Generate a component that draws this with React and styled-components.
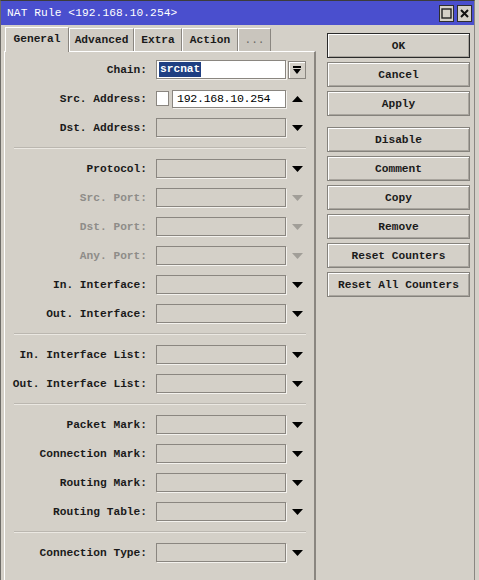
import React from "react";
import styled, { createGlobalStyle } from "styled-components";

const GlobalStyle = createGlobalStyle`
  html, body {
    margin: 0;
    padding: 0;
    height: 580px;
    overflow: hidden;
    background: #d4d0c8;
  }
`;

const FONT = `"Liberation Mono", "DejaVu Sans Mono", monospace`;

const Window = styled.div`
  width: 475px;
  height: 580px;
  box-sizing: border-box;
  background: #d4d0c8;
  border-left: 1px solid #6e6c68;
  border-right: 1px solid #8a8782;
  border-top: 1px solid #3c3c3c;
  font-family: ${FONT};
  font-size: 11.2px;
  color: #000;
  overflow: hidden;
`;

const TitleBar = styled.div`
  height: 24px;
  background: #4a4fce;
  display: flex;
  align-items: center;
  justify-content: space-between;
  padding: 0 2px 0 6px;
  color: #fff;
`;

const TitleText = styled.span`
  letter-spacing: 0.1px;
`;

const TitleButtons = styled.div`
  display: flex;
  gap: 3px;
`;

const TitleButton = styled.div`
  width: 15px;
  height: 17px;
  box-sizing: border-box;
  background: #d4d0c8;
  border: 1px solid #2e2e2e;
  display: flex;
  align-items: center;
  justify-content: center;
`;

const Body = styled.div`
  display: flex;
  align-items: flex-start;
  padding: 2px 0 0 3px;
`;

const LeftSide = styled.div`
  display: flex;
  flex-direction: column;
`;

const TabStrip = styled.div`
  display: flex;
  align-items: flex-end;
  height: 24px;
  padding-left: 1px;
  position: relative;
  z-index: 1;
`;

const Tab = styled.div`
  width: ${(p) => p.$w}px;
  height: ${(p) => (p.$active ? 25 : 23)}px;
  box-sizing: border-box;
  display: flex;
  align-items: center;
  justify-content: center;
  background: ${(p) => (p.$active ? "#d4d0c8" : p.$dim ? "#c9c5bd" : "#d0ccc4")};
  border-top: 1px solid #fff;
  border-left: 1px solid #fff;
  border-right: 1px solid #8a8680;
  padding-bottom: ${(p) => (p.$active ? 2 : 0)}px;
  margin-bottom: ${(p) => (p.$active ? -1 : 0)}px;
  font-weight: ${(p) => (p.$dim ? "normal" : "bold")};
  color: ${(p) => (p.$dim ? "#6d6b66" : "#1a1a1a")};
`;

const Panel = styled.div`
  width: 312px;
  height: 560px;
  box-sizing: border-box;
  border-top: 1px solid #fff;
  border-left: 1px solid #fff;
  border-right: 2px solid #8a8680;
  padding-top: 8px;
  display: flex;
  flex-direction: column;
  gap: 10px;
`;

const Row = styled.div`
  display: grid;
  grid-template-columns: 144px 130px 20px;
  column-gap: 7px;
  align-items: center;
  height: 19px;
`;

const Label = styled.div`
  text-align: right;
  padding-right: 2px;
  white-space: pre;
  font-weight: bold;
  color: ${(p) => (p.$disabled ? "#8e8c88" : "#1a1a1a")};
`;

const Field = styled.div`
  height: 19px;
  box-sizing: border-box;
  background: ${(p) => (p.$white ? "#fff" : "#d4d0c8")};
  border: 1px solid #8a8680;
  box-shadow: 1px 1px 0 #f4f2ee;
  display: flex;
  align-items: center;
  padding-left: 2px;
`;

const Selected = styled.span`
  background: #1f3f82;
  color: #fff;
  font-weight: bold;
  padding: 0 1px;
  line-height: 15px;
`;

const SplitField = styled.div`
  display: flex;
  gap: 3px;
  align-items: center;
`;

const Check = styled.div`
  width: 13px;
  height: 15px;
  box-sizing: border-box;
  background: #fff;
  border: 1px solid #8a8680;
`;

const Value = styled(Field)`
  flex: 1;
  height: 18px;
  padding-left: 4px;
  font-size: 11.6px;
  letter-spacing: -0.3px;
`;

const Arrow = styled.div`
  display: flex;
  align-items: center;
  margin-left: -1px;
`;

const ChainButton = styled.div`
  width: 18px;
  height: 18px;
  box-sizing: border-box;
  margin-left: -5px;
  background: #d4d0c8;
  border: 1px solid #8a8680;
  box-shadow: inset 1px 1px 0 #fff;
  display: flex;
  align-items: center;
  justify-content: center;
`;

const Separator = styled.div`
  height: 0;
  margin: 0 8px 0 9px;
  border-top: 1px solid #bbb7b0;
  border-bottom: 1px solid #ebe8e2;
`;

const ButtonColumn = styled.div`
  display: flex;
  flex-direction: column;
  gap: 4px;
  margin: 6px 0 0 11px;
`;

const Button = styled.div`
  width: 143px;
  height: 25px;
  box-sizing: border-box;
  display: flex;
  align-items: center;
  justify-content: center;
  font-weight: bold;
  color: #1a1a1a;
  border: 1px solid ${(p) => (p.$default ? "#2a2a2a" : "#85827c")};
  box-shadow: inset 1px 1px 0 #fff, inset -1px -1px 0 #a9a59e;
  margin-top: ${(p) => (p.$gapBefore ? 7 : 0)}px;
`;

const Triangle = ({ up, color = "#000" }) => (
  <svg width="11" height="6" viewBox="0 0 11 6">
    <polygon points={up ? "0,6 11,6 5.5,0" : "0,0 11,0 5.5,6"} fill={color} />
  </svg>
);

const DropDown = () => (
  <svg width="10" height="10" viewBox="0 0 10 10">
    <rect x="1" y="1" width="8" height="2" fill="#000" />
    <polygon points="1,4 9,4 5,9" fill="#000" />
  </svg>
);

const sections = [
  [
    { label: "Protocol:" },
    { label: "Src. Port:", disabled: true },
    { label: "Dst. Port:", disabled: true },
    { label: "Any. Port:", disabled: true },
    { label: "In. Interface:" },
    { label: "Out. Interface:" },
  ],
  [{ label: "In. Interface List:" }, { label: "Out. Interface List:" }],
  [
    { label: "Packet Mark:" },
    { label: "Connection Mark:" },
    { label: "Routing Mark:" },
    { label: "Routing Table:" },
  ],
  [{ label: "Connection Type:" }],
];

const tabs = [
  { name: "General", w: 64, active: true },
  { name: "Advanced", w: 65 },
  { name: "Extra", w: 48 },
  { name: "Action", w: 56 },
  { name: "...", w: 33, dim: true },
];

const buttons = [
  { text: "OK", def: true },
  { text: "Cancel" },
  { text: "Apply" },
  { text: "Disable", gap: true },
  { text: "Comment" },
  { text: "Copy" },
  { text: "Remove" },
  { text: "Reset Counters" },
  { text: "Reset All Counters" },
];

const SelectRow = ({ label, disabled }) => (
  <Row>
    <Label $disabled={disabled}>{label}</Label>
    <Field />
    <Arrow>
      <Triangle color={disabled ? "#a19e98" : "#000"} />
    </Arrow>
  </Row>
);

const App = () => {
  return (
    <>
      <GlobalStyle />
      <Window>
        <TitleBar>
          <TitleText>NAT Rule &lt;192.168.10.254&gt;</TitleText>
          <TitleButtons>
            <TitleButton>
              <svg width="11" height="11" viewBox="0 0 11 11">
                <rect x="1" y="1" width="9" height="9" fill="none" stroke="#222" strokeWidth="1.4" />
              </svg>
            </TitleButton>
            <TitleButton>
              <svg width="11" height="11" viewBox="0 0 11 11">
                <path d="M2 2 L9 9 M9 2 L2 9" stroke="#111" strokeWidth="2" />
              </svg>
            </TitleButton>
          </TitleButtons>
        </TitleBar>
        <Body>
          <LeftSide>
            <TabStrip>
              {tabs.map((t) => (
                <Tab key={t.name} $w={t.w} $active={t.active} $dim={t.dim}>
                  {t.name}
                </Tab>
              ))}
            </TabStrip>
            <Panel>
              <Row>
                <Label>Chain:</Label>
                <Field $white>
                  <Selected>srcnat</Selected>
                </Field>
                <ChainButton>
                  <DropDown />
                </ChainButton>
              </Row>
              <Row>
                <Label>Src. Address:</Label>
                <SplitField>
                  <Check />
                  <Value $white>192.168.10.254</Value>
                </SplitField>
                <Arrow>
                  <Triangle up />
                </Arrow>
              </Row>
              <SelectRow label="Dst. Address:" />
              {sections.map((rows, i) => (
                <React.Fragment key={i}>
                  <Separator />
                  {rows.map((r) => (
                    <SelectRow key={r.label} label={r.label} disabled={r.disabled} />
                  ))}
                </React.Fragment>
              ))}
            </Panel>
          </LeftSide>
          <ButtonColumn>
            {buttons.map((b) => (
              <Button key={b.text} $default={b.def} $gapBefore={b.gap}>
                {b.text}
              </Button>
            ))}
          </ButtonColumn>
        </Body>
      </Window>
    </>
  );
};

export default App;
